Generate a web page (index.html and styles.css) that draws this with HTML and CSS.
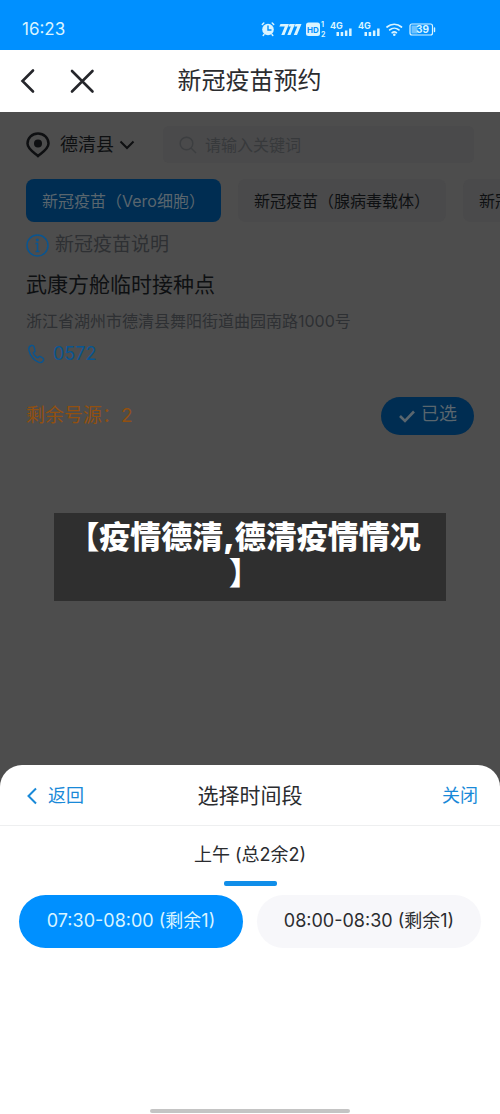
FILE: index.html
```
<!DOCTYPE html>
<html lang="zh-CN">
<head>
<meta charset="utf-8">
<meta name="viewport" content="width=device-width, initial-scale=1">
<title>新冠疫苗预约</title>
<link rel="stylesheet" href="styles.css">
</head>
<body>
<div class="status">
  <span class="clock">16:23</span>
  <svg class="status-icons" width="176" height="18" viewBox="0 0 176 18" aria-hidden="true">
    <g fill="none" stroke="#d9f4ff" stroke-linecap="round">
      <circle cx="8" cy="9.5" r="5.8" fill="#d9f4ff" stroke="none"/>
      <path d="M2.300 4.500l1.500-1.500M13.700 4.500l-1.500-1.500M4 14.500l-.8 1M12 14.500l.8 1" stroke-width="1.500"/>
      <path d="M8 6v4h3" stroke="#0090ff" stroke-width="1.400"/>
      <rect x="150" y="4" width="22.500" height="11" rx="2" stroke-width="1.200"/>
      <path d="M174.500 8v3.500" stroke-width="1.400"/>
      <path d="M127 7a11 11 0 0 1 14.500 0M129.700 9.900a7.200 7.200 0 0 1 9.200 0M132.200 12.700a3.500 3.500 0 0 1 4.200 0" stroke-width="1.700"/>
    </g>
    <g fill="#d9f4ff">
      <path d="M20.500 4h8.500l-4.500 11h-3.200l3.500-8.500h-5.500zM29.500 4h5.500l-4.500 11h-3.200l3.500-8.500h-2.300zM35.500 4h6l-4.500 11h-3.200l3.500-8.500h-2.800z"/>
      <rect x="46" y="2.500" width="14" height="13.500" rx="2.500"/>
      <circle cx="134.300" cy="14.800" r="1.300"/>
      <path d="M76.500 12h2.500v4h-2.500zM80.700 12h2.500v4h-2.500zM84.900 10.500h2.500v5.500h-2.500zM89.100 8.500h2.500v7.500h-2.500zM104.500 12h2.500v4h-2.500zM108.700 12h2.500v4h-2.500zM112.900 10.500h2.500v5.500h-2.500zM117.100 8.500h2.500v7.500h-2.500z"/>
      <rect x="151.500" y="5.500" width="6" height="8" opacity=".5"/>
    </g>
    <g class="status-text">
      <text x="47" y="12.500" class="hd">HD</text>
      <text x="61" y="7" class="sim">1</text><text x="61" y="16.500" class="sim">2</text>
      <text x="70" y="8.500">4G</text><text x="98" y="8.500">4G</text>
      <text x="156" y="13.200" class="battery">39</text>
    </g>
  </svg>
</div>
<header class="titlebar">
  <button class="icon-btn prev" aria-label="返回上一页"><svg width="18" height="26" viewBox="0 0 18 26"><path d="M14 2.500L3.500 13 14 23.500"/></svg></button>
  <button class="icon-btn exit" aria-label="关闭页面"><svg width="26" height="26" viewBox="0 0 26 26"><path d="M3 3l20.500 20.500M23.500 3L3 23.500"/></svg></button>
  <h1>新冠疫苗预约</h1>
</header>
<main class="page">
  <div class="searchrow">
    <button class="place">
      <svg width="24" height="26" viewBox="0 0 24 26" fill="none" stroke="#0e0f11" stroke-width="2.500"><path d="M12 24C8 20.500 1.500 17 1.500 11.500a10.500 10 0 0 1 21 0C22.500 17 16 20.500 12 24z"/><circle cx="12" cy="11.500" r="4" fill="#0e0f11" stroke="none"/></svg>
      <span>德清县</span>
      <svg class="chevron" width="16" height="10" viewBox="0 0 16 10"><path d="M1.500 1.500L8 8l6.500-6.500"/></svg>
    </button>
    <label class="search">
      <svg width="18" height="18" viewBox="0 0 18 18" fill="none" stroke="#3c3e40" stroke-width="1.400"><circle cx="7.500" cy="7.500" r="6.300"/><path d="M12 12l5 5"/></svg>
      <input type="search" placeholder="请输入关键词" aria-label="请输入关键词">
    </label>
  </div>
  <nav class="tabs">
    <button class="tab active">新冠疫苗（Vero细胞）</button>
    <button class="tab">新冠疫苗（腺病毒载体）</button>
    <button class="tab">新冠疫苗</button>
  </nav>
  <a class="info" href="#info">
    <svg width="23" height="23" viewBox="0 0 23 23" fill="none" stroke="#0a5590" stroke-width="1.500"><circle cx="11.500" cy="11.500" r="10.500"/><path d="M9.500 9.500h2v8M9.500 17.500h4" stroke-width="1.500"/><circle cx="11.300" cy="6" r="1.500" fill="#0a5590" stroke="none"/></svg>
    <span>新冠疫苗说明</span>
  </a>
  <h2>武康方舱临时接种点</h2>
  <p class="address">浙江省湖州市德清县舞阳街道曲园南路1000号</p>
  <a class="phone" href="tel:0572">
    <svg width="18" height="20" viewBox="0 0 18 20" fill="none" stroke="#0a5590" stroke-width="1.400" stroke-linejoin="round"><path d="M4.500 1.500C2.500 2 1.500 4 2 6.500 3 12 7.500 17 12 18.300c2.500.7 4-.6 4.500-2.300.2-.8 0-1.500-.7-2l-2.300-1.300c-.8-.5-1.500-.2-2 .5l-.5.7c-2-.7-4.300-3.400-4.700-5.400l.9-.5c.8-.4 1-1 .7-1.800L7 2.700c-.4-1-1.400-1.500-2.500-1.200z"/></svg>
    <span>0572</span>
  </a>
  <div class="stock">
    <span>剩余号源：2</span>
    <button class="chosen"><svg width="18" height="14" viewBox="0 0 18 14"><path d="M2 7l5 5 9-9.500"/></svg><span>已选</span></button>
  </div>
  <p class="caption">【疫情德清,德清疫情情况<br>】</p>
</main>
<section class="sheet" aria-label="选择时间段">
  <div class="sheet-head">
    <button class="link back"><svg width="10" height="18" viewBox="0 0 10 18"><path d="M9 1.500L1.500 9 9 16.500"/></svg>返回</button>
    <h2>选择时间段</h2>
    <button class="link close">关闭</button>
  </div>
  <button class="period">上午 (总2余2)</button>
  <div class="slots">
    <button class="slot selected">07:30-08:00 (剩余1)</button>
    <button class="slot">08:00-08:30 (剩余1)</button>
  </div>
  <div class="home"></div>
</section>
</body>
</html>
```
FILE: styles.css
```
* { box-sizing: border-box; }
body {
  margin: 0;
  min-height: 100vh;
  display: flex;
  flex-direction: column;
  background: #4d4d4d;
  color: #2b2c2f;
  font: 18px/26px Inter, "Noto Sans CJK SC", sans-serif;
  overflow-x: hidden;
}
h1, h2, p { margin: 0; font-weight: 400; }
button {
  margin: 0;
  padding: 0;
  border: 0;
  background: none;
  color: inherit;
  font: inherit;
  white-space: nowrap;
}
a { color: inherit; text-decoration: none; }
svg { display: block; flex: none; }

.status {
  display: flex;
  align-items: center;
  justify-content: space-between;
  height: 50px;
  padding: 7px 64px 0 22px;
  background: #0090ff;
  color: #d9f4ff;
}
.clock { font-size: 17px; }
.status-text { fill: #d9f4ff; font-size: 9px; font-weight: 700; }
.status-text .hd { fill: #0090ff; font-size: 8px; }
.status-text .sim { font-size: 7px; }
.status-text .battery { font-size: 10px; }

.titlebar {
  display: grid;
  grid-template-columns: 18px 26px 1fr;
  align-items: center;
  column-gap: 32px;
  height: 62px;
  padding: 0 20px 0 19px;
  background: #fff;
}
.titlebar h1 {
  grid-column: 1 / -1;
  grid-row: 1;
  text-align: center;
  font-size: 24px;
  line-height: 36px;
}
.icon-btn { grid-row: 1; z-index: 1; }
.prev { grid-column: 1; }
.exit { grid-column: 2; }
.icon-btn svg { fill: none; stroke: #25262b; stroke-width: 2.6; stroke-linecap: round; }

.page { flex: 1; padding: 14px 26px 0; color: #0e1012; }
.searchrow { display: flex; align-items: center; gap: 28px; }
.place { display: flex; align-items: center; gap: 10px; }
.chevron { margin-left: -5px; fill: none; stroke: #0e0f11; stroke-width: 2; }
.search {
  flex: 1;
  display: flex;
  align-items: center;
  gap: 8px;
  height: 37px;
  padding: 0 16px;
  border-radius: 6px;
  background: #4a4a4b;
}
.search input {
  flex: 1;
  min-width: 0;
  padding: 0;
  border: 0;
  outline: 0;
  background: none;
  font: inherit;
  font-size: 16px;
}
.search input::placeholder { color: #37393b; opacity: 1; }
.tabs { display: flex; gap: 17px; margin: 16px -26px 0 0; overflow: hidden; }
.tab {
  flex: none;
  height: 43px;
  padding: 0 16px;
  border-radius: 8px;
  background: #4a4a4b;
  font-size: 16px;
}
.tab.active { background: #002d52; color: #5a666e; }
.info { display: flex; align-items: center; gap: 6px; margin-top: 10px; color: #2e3033; font-size: 19px; }
.page h2 { margin-top: 12px; font-size: 21px; line-height: 30px; }
.address { margin-top: 8px; color: #2e3033; font-size: 16px; }
.phone { display: flex; align-items: center; gap: 8px; margin-top: 7px; padding-left: 1px; color: #0a5590; }
.stock { display: flex; align-items: center; justify-content: space-between; margin-top: 30px; color: #925010; font-size: 19px; }
.chosen {
  display: flex;
  align-items: center;
  gap: 5px;
  height: 38px;
  padding: 0 17px;
  border-radius: 19px;
  background: #002d52;
  color: #5a666e;
  font-size: 18px;
}
.chosen span { padding-bottom: 4px; }
.chosen svg { fill: none; stroke: #5a666e; stroke-width: 2.6; }
.caption {
  margin: 78px 28px 32px;
  padding: 6px 11px 10px 0;
  background: #2f2f2f;
  color: #fff;
  text-align: center;
  font-size: 31px;
  font-weight: 900;
  line-height: 36px;
}

.sheet {
  min-height: 349px;
  display: flex;
  flex-direction: column;
  border-radius: 22px 22px 0 0;
  background: #fff;
}
.sheet-head {
  display: grid;
  grid-template-columns: 1fr auto 1fr;
  align-items: center;
  height: 61px;
  padding: 1px 22px 0;
  border-bottom: 1px solid #eeeff0;
}
.sheet-head h2 { font-size: 21px; }
.link { display: flex; align-items: center; gap: 11px; color: #1989d8; }
.link svg { fill: none; stroke: #1989d8; stroke-width: 2; }
.back { padding-left: 5px; }
.close { justify-self: end; }
.period {
  align-self: center;
  display: flex;
  flex-direction: column;
  align-items: center;
  gap: 13px;
  margin-top: 16px;
}
.period::after { content: ""; width: 53px; height: 5px; border-radius: 2px; background: #108ee9; }
.slots { display: grid; grid-template-columns: 1fr 1fr; gap: 14px; padding: 9px 19px; }
.slot { height: 53px; padding-bottom: 2px; border-radius: 27px; background: #f7f7fa; }
.slot.selected { background: #0090ff; color: #d9f4ff; }
.home { width: 40%; height: 4px; margin: auto auto 1px; border-radius: 2px; background: #c4c4c4; }
```
